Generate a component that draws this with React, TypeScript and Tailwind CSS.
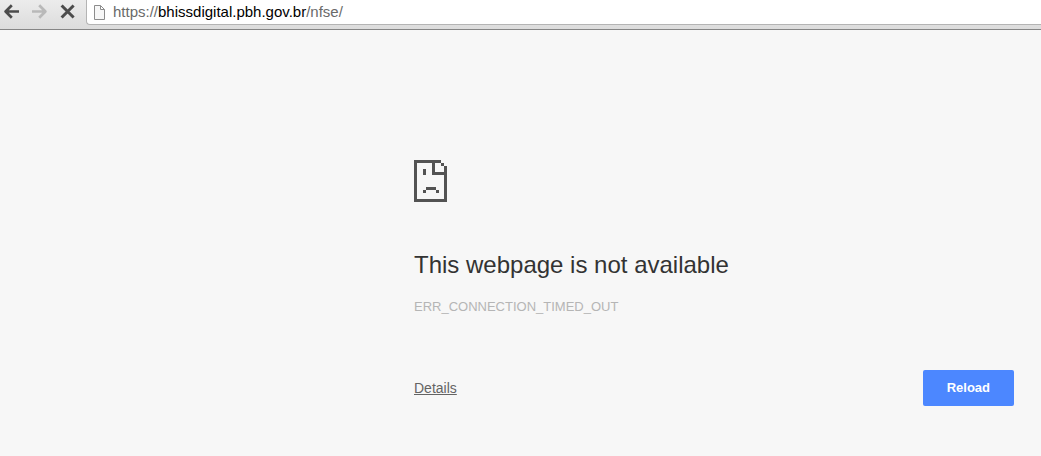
import { useState } from "react";

const SadPage = () => (
  <svg width="33" height="42" viewBox="0 0 33 42" fill="#535353" shapeRendering="crispEdges" aria-hidden="true">
    <path d="M0 0H27V3H0zM0 0H3V42H0zM0 39H33V42H0zM30 6H33V42H30zM27 3H30V6H27z" />
    <path d="M18 0H21V15H18zM18 12H33V15H18z" />
    <path d="M9 9H12V15H9zM12 27H22V30H12zM9 30H12V33H9zM22 30H25V33H22z" />
  </svg>
);

const Toolbar = () => {
  const [url, setUrl] = useState("https://bhissdigital.pbh.gov.br/nfse/");
  const [editing, setEditing] = useState(false);

  return (
    <header className="flex h-[30px] items-start border-b border-[#858585] bg-linear-to-b from-[#ececec] to-[#dcdcdc]">
      <nav className="flex h-6 items-center gap-3 pl-1 pr-[10px]">
        <button type="button" aria-label="Back" className="text-[#4c4c4c]">
          <svg width="16" height="24" viewBox="0 0 16 24" fill="none" stroke="currentColor" strokeWidth="2.7" strokeLinejoin="round">
            <path d="M15 11.5H2M7.8 5.3L1.6 11.5L7.8 17.7" />
          </svg>
        </button>
        <button type="button" aria-label="Forward" disabled className="text-[#b9b9b9]">
          <svg width="16" height="24" viewBox="0 0 16 24" fill="none" stroke="currentColor" strokeWidth="2.7" strokeLinejoin="round">
            <path d="M0 11.5H13M7.2 5.3L13.4 11.5L7.2 17.7" />
          </svg>
        </button>
        <button type="button" aria-label="Stop" className="text-[#4c4c4c]">
          <svg width="16" height="24" viewBox="0 0 16 24" fill="none" stroke="currentColor" strokeWidth="3">
            <path d="M1.6 5.5L13.6 17.5M13.6 5.5L1.6 17.5" />
          </svg>
        </button>
      </nav>
      <div className="flex h-[25px] min-w-0 flex-1 items-center gap-2 rounded-bl border-b border-l border-[#b4b4b4] bg-white pl-[7px]">
        <svg width="11" height="15" viewBox="0 0 11 15" fill="#f7f7f7" stroke="#8c8c8c" aria-hidden="true">
          <path d="M.5 .5H6.5L10.5 4.5V14.5H.5zM6.5 .5V4.5H10.5" />
        </svg>
        {editing ? (
          <input
            aria-label="Address"
            autoFocus
            value={url}
            onChange={(e) => setUrl(e.target.value)}
            onBlur={() => setEditing(false)}
            className="min-w-0 flex-1 text-[15px] leading-6 outline-none"
          />
        ) : (
          <a
            href="#address"
            onClick={(e) => {
              e.preventDefault();
              setEditing(true);
            }}
            className="flex-1 truncate text-[15px] leading-6 text-[#6a6a6a]"
          >
            https://<span className="text-black">bhissdigital.pbh.gov.br</span>/nfse/
          </a>
        )}
      </div>
    </header>
  );
};

export default function App() {
  return (
    <div className="min-h-screen bg-[#f7f7f7] font-['Liberation_Sans',Arial,sans-serif]">
      <Toolbar />
      <main className="flex justify-end pl-6 pr-[27px] pt-[130px]">
        <div className="w-full max-w-[600px]">
          <SadPage />
          <h1 className="mt-12 text-2xl leading-[30px] text-[#333]">This webpage is not available</h1>
          <p className="mt-[19px] text-[13px] leading-4 text-[#b5b5b5]">ERR_CONNECTION_TIMED_OUT</p>
          <div className="mt-[55px] flex items-center justify-between">
            <a href="#details" className="text-sm text-[#646464] underline">
              Details
            </a>
            <button
              type="button"
              onClick={() => window.location.reload()}
              className="h-9 rounded-xs bg-[#4c87ff] px-6 text-[13px] font-bold text-white"
            >
              Reload
            </button>
          </div>
        </div>
      </main>
    </div>
  );
}
